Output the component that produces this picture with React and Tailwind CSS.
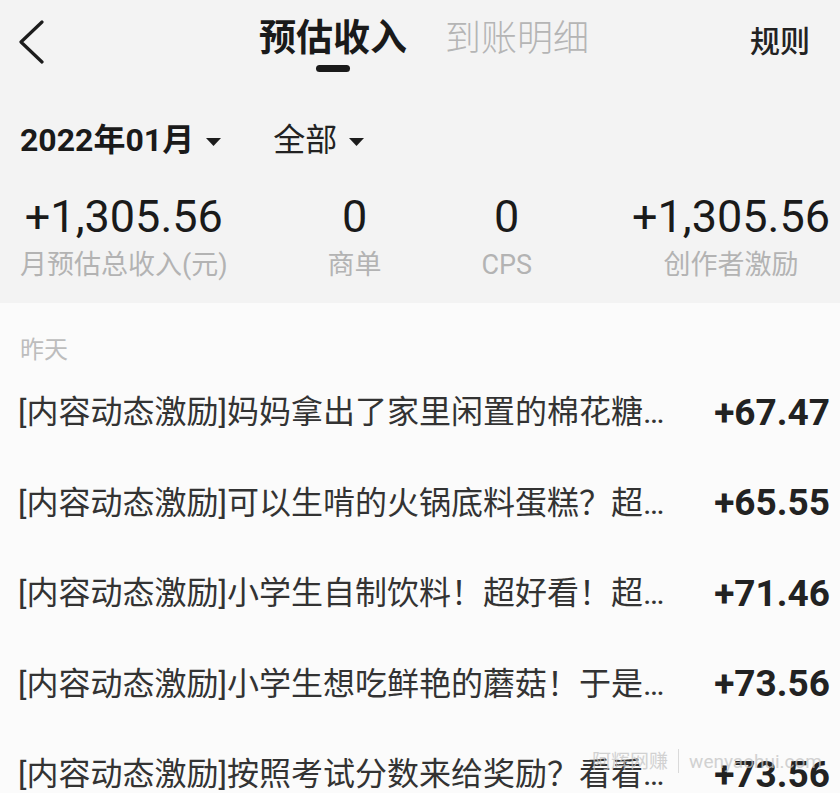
const font = { fontFamily: 'Roboto, "Noto Sans CJK SC", sans-serif' }

const stats = [
  { value: '+1,305.56', label: '月预估总收入(元)' },
  { value: '0', label: '商单' },
  { value: '0', label: 'CPS' },
  { value: '+1,305.56', label: '创作者激励' },
]

const records = [
  { title: '[内容动态激励]妈妈拿出了家里闲置的棉花糖…', amount: '+67.47' },
  { title: '[内容动态激励]可以生啃的火锅底料蛋糕？超…', amount: '+65.55' },
  { title: '[内容动态激励]小学生自制饮料！超好看！超…', amount: '+71.46' },
  { title: '[内容动态激励]小学生想吃鲜艳的蘑菇！于是…', amount: '+73.56' },
  { title: '[内容动态激励]按照考试分数来给奖励？看看…', amount: '+73.56' },
]

function Caret() {
  return (
    <svg width="15" height="8" viewBox="0 0 15 8" className="ml-[12px] mt-[2px]">
      <polygon points="0,0 15,0 7.5,8" fill="#1c1c1c" />
    </svg>
  )
}

function Header() {
  return (
    <div className="grid h-[72px] grid-cols-[1fr_auto_1fr]">
      <div className="pl-[18px] pt-[20px]">
        <svg width="28" height="44" viewBox="0 0 28 44">
          <polyline
            points="24,2 3,22 24,42"
            fill="none"
            stroke="#1c1c1c"
            strokeWidth="3.2"
            strokeLinecap="round"
            strokeLinejoin="round"
          />
        </svg>
      </div>
      <div className="flex gap-[38px] pl-[8px] pt-[21px]">
        <div className="flex flex-col items-center">
          <span className="text-[37px] font-bold leading-[36px] text-[#1a1a1a]">预估收入</span>
          <span className="mt-[8px] h-[7px] w-[34px] rounded-full bg-[#1a1a1a]" />
        </div>
        <span className="text-[36px] font-light leading-[36px] text-[#b5b5b5]">到账明细</span>
      </div>
      <div className="flex justify-end pr-[30px] pt-[27px]">
        <span className="text-[30px] font-medium leading-[30px] text-[#222]">规则</span>
      </div>
    </div>
  )
}

function Summary() {
  return (
    <div className="bg-[#f3f3f3]">
      <Header />
      <div className="mt-[53px] flex items-center pl-[20px] text-[32px] leading-[31px]">
        <span className="font-bold text-[#1a1a1a]">2022年01月</span>
        <Caret />
        <span className="ml-[52px] text-[#222]">全部</span>
        <Caret />
      </div>
      <div className="mt-[39px] flex justify-between pb-[24px] pl-[20px] pr-[10px]">
        {stats.map((s, i) => (
          <div key={i} className="flex flex-col items-center">
            <span className="text-[45px] leading-[44px] text-[#1a1a1a]">{s.value}</span>
            <span className="mt-[13px] text-[27px] leading-[27px] text-[#b3b3b3]">{s.label}</span>
          </div>
        ))}
      </div>
    </div>
  )
}

export default function App() {
  return (
    <div className="relative h-[793px] w-[840px] overflow-hidden bg-[#fbfbfb]" style={font}>
      <Summary />
      <div className="pt-[35px]">
        <div className="pl-[20px] text-[24px] leading-[24px] text-[#bdbdbd]">昨天</div>
        <div className="mt-[5px]">
          {records.map((r, i) => (
            <div key={i} className="flex h-[90.5px] items-center justify-between pl-[18px] pr-[10px]">
              <span className="min-w-0 overflow-hidden whitespace-nowrap text-[32px] text-[#333]">
                {r.title}
              </span>
              <span className="ml-[30px] shrink-0 text-[37px] font-bold text-[#222]">{r.amount}</span>
            </div>
          ))}
        </div>
      </div>
      {/* site watermark stamped over the last row */}
      <div className="pointer-events-none absolute bottom-[20px] right-[18px] flex items-center gap-[10px] text-[19px] leading-[19px] text-[#c4c4c4] opacity-75">
        <span>阿辉网赚</span>
        <span className="h-[24px] w-px bg-[#cfcfcf]" />
        <span>wenyaohui.com</span>
      </div>
    </div>
  )
}
